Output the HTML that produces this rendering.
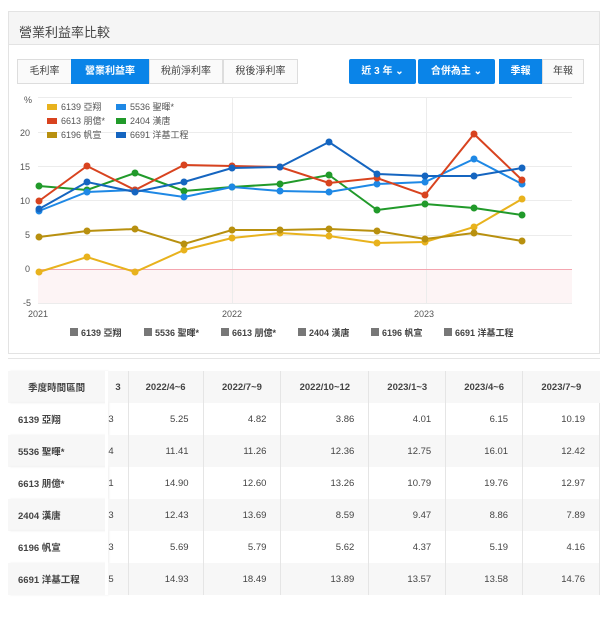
<!DOCTYPE html>
<html><head><meta charset="utf-8"><style>
*{box-sizing:border-box;margin:0;padding:0}
body{width:608px;height:622px;background:#fff;font-family:"Liberation Sans","Noto Sans CJK TC",sans-serif;color:#333;position:relative;overflow:hidden}
.panel{position:absolute;left:8px;top:11px;width:592px;height:343px;border:1px solid #e3e3e3;background:#fff}
.ph{height:33px;background:#f5f5f5;border-bottom:1px solid #e3e3e3;font-size:13px;padding:10px 0 0 10px;color:#444}
.btn{position:absolute;top:47px;height:25px;font-size:10px;line-height:23px;text-align:center;border:1px solid #ddd;background:#fafafa;color:#444}
.b{background:#0a84e8;color:#fff;border-color:#0a84e8;font-weight:bold}
.tbl{position:absolute;left:8px;top:358px;width:592px;height:236px;border-top:1px solid #e5e5e5}
table{border-collapse:collapse;font-size:9.5px;position:absolute;left:0;top:12px;color:#444}
td{height:32px;border-right:1px solid #e5e5e5;text-align:right;padding-right:14px}
tr.h td{text-align:center;padding:0;font-weight:bold}
tr:nth-child(odd) td{background:#f7f7f7}
td.f{text-align:left;padding-left:10px;font-weight:bold;border-right:3px solid #fff;box-shadow:2px 0 2px #eee}
</style></head><body>
<div class="panel">
<div class="ph">營業利益率比較</div>
<div class="btn" style="left:8px;width:55px">毛利率</div>
<div class="btn b" style="left:62px;width:78px">營業利益率</div>
<div class="btn" style="left:140px;width:74px">稅前淨利率</div>
<div class="btn" style="left:214px;width:75px">稅後淨利率</div>
<div class="btn b" style="left:340px;width:67px;border-radius:2px">近 3 年 ⌄</div>
<div class="btn b" style="left:409px;width:77px;border-radius:2px">合併為主 ⌄</div>
<div class="btn b" style="left:490px;width:43px">季報</div>
<div class="btn" style="left:533px;width:42px">年報</div>
</div>
<svg style="position:absolute;left:0;top:0" width="608" height="360" font-family="Liberation Sans,Noto Sans CJK TC,sans-serif">
<rect x="38" y="269" width="534" height="34" fill="#fdf4f5"/>
<g stroke="#ececec" stroke-width="1">
<line x1="38" y1="97.5" x2="572" y2="97.5"/><line x1="38" y1="132.5" x2="572" y2="132.5"/><line x1="38" y1="166.5" x2="572" y2="166.5"/><line x1="38" y1="200.5" x2="572" y2="200.5"/><line x1="38" y1="235.5" x2="572" y2="235.5"/><line x1="38" y1="303.5" x2="572" y2="303.5"/>
<line x1="232.5" y1="97" x2="232.5" y2="303"/><line x1="426.5" y1="97" x2="426.5" y2="303"/></g>
<line x1="38" y1="269.5" x2="572" y2="269.5" stroke="#f4a6b0"/>
<g font-size="9" fill="#555"><text x="24" y="103">%</text><text x="20" y="136">20</text><text x="20" y="170">15</text><text x="20" y="204">10</text><text x="25" y="238">5</text><text x="25" y="272">0</text><text x="23" y="306">-5</text>
<text x="28" y="317">2021</text><text x="222" y="317">2022</text><text x="414" y="317">2023</text></g>
<g font-size="9" fill="#555">
<rect x="47" y="104" width="10" height="6" fill="#e8b21d"/><text x="61" y="110">6139 亞翔</text>
<rect x="116" y="104" width="10" height="6" fill="#1e88e5"/><text x="130" y="110">5536 聖暉*</text>
<rect x="47" y="118" width="10" height="6" fill="#d8431f"/><text x="61" y="124">6613 朋億*</text>
<rect x="116" y="118" width="10" height="6" fill="#219a2a"/><text x="130" y="124">2404 漢唐</text>
<rect x="47" y="132" width="10" height="6" fill="#b8900f"/><text x="61" y="138">6196 帆宣</text>
<rect x="116" y="132" width="10" height="6" fill="#1565c0"/><text x="130" y="138">6691 洋基工程</text>
</g>
<g fill="none" stroke-width="2">
<polyline stroke="#e8b21d" points="39,272 87,257 135,272 184,250 232,238 280,233 329,236 377,243 425,242 474,227 522,199"/>
<polyline stroke="#b8900f" points="39,237 87,231 135,229 184,244 232,230 280,230 329,229 377,231 425,239 474,233 522,241"/>
<polyline stroke="#219a2a" points="39,186 87,190 135,173 184,191 232,187 280,184 329,175 377,210 425,204 474,208 522,215"/>
<polyline stroke="#1e88e5" points="39,211 87,192 135,190 184,197 232,187 280,191 329,192 377,184 425,182 474,159 522,184"/>
<polyline stroke="#d8431f" points="39,201 87,166 135,190 184,165 232,166 280,167 329,183 377,178 425,195 474,134 522,180"/>
<polyline stroke="#1565c0" points="39,209 87,182 135,192 184,182 232,168 280,167 329,142 377,174 425,176 474,176 522,168"/>
</g>
<g stroke="none">
<g fill="#e8b21d"><circle cx="39" cy="272" r="3.5"/><circle cx="87" cy="257" r="3.5"/><circle cx="135" cy="272" r="3.5"/><circle cx="184" cy="250" r="3.5"/><circle cx="232" cy="238" r="3.5"/><circle cx="280" cy="233" r="3.5"/><circle cx="329" cy="236" r="3.5"/><circle cx="377" cy="243" r="3.5"/><circle cx="425" cy="242" r="3.5"/><circle cx="474" cy="227" r="3.5"/><circle cx="522" cy="199" r="3.5"/></g>
<g fill="#b8900f"><circle cx="39" cy="237" r="3.5"/><circle cx="87" cy="231" r="3.5"/><circle cx="135" cy="229" r="3.5"/><circle cx="184" cy="244" r="3.5"/><circle cx="232" cy="230" r="3.5"/><circle cx="280" cy="230" r="3.5"/><circle cx="329" cy="229" r="3.5"/><circle cx="377" cy="231" r="3.5"/><circle cx="425" cy="239" r="3.5"/><circle cx="474" cy="233" r="3.5"/><circle cx="522" cy="241" r="3.5"/></g>
<g fill="#219a2a"><circle cx="39" cy="186" r="3.5"/><circle cx="87" cy="190" r="3.5"/><circle cx="135" cy="173" r="3.5"/><circle cx="184" cy="191" r="3.5"/><circle cx="232" cy="187" r="3.5"/><circle cx="280" cy="184" r="3.5"/><circle cx="329" cy="175" r="3.5"/><circle cx="377" cy="210" r="3.5"/><circle cx="425" cy="204" r="3.5"/><circle cx="474" cy="208" r="3.5"/><circle cx="522" cy="215" r="3.5"/></g>
<g fill="#1e88e5"><circle cx="39" cy="211" r="3.5"/><circle cx="87" cy="192" r="3.5"/><circle cx="135" cy="190" r="3.5"/><circle cx="184" cy="197" r="3.5"/><circle cx="232" cy="187" r="3.5"/><circle cx="280" cy="191" r="3.5"/><circle cx="329" cy="192" r="3.5"/><circle cx="377" cy="184" r="3.5"/><circle cx="425" cy="182" r="3.5"/><circle cx="474" cy="159" r="3.5"/><circle cx="522" cy="184" r="3.5"/></g>
<g fill="#d8431f"><circle cx="39" cy="201" r="3.5"/><circle cx="87" cy="166" r="3.5"/><circle cx="135" cy="190" r="3.5"/><circle cx="184" cy="165" r="3.5"/><circle cx="232" cy="166" r="3.5"/><circle cx="280" cy="167" r="3.5"/><circle cx="329" cy="183" r="3.5"/><circle cx="377" cy="178" r="3.5"/><circle cx="425" cy="195" r="3.5"/><circle cx="474" cy="134" r="3.5"/><circle cx="522" cy="180" r="3.5"/></g>
<g fill="#1565c0"><circle cx="39" cy="209" r="3.5"/><circle cx="87" cy="182" r="3.5"/><circle cx="135" cy="192" r="3.5"/><circle cx="184" cy="182" r="3.5"/><circle cx="232" cy="168" r="3.5"/><circle cx="280" cy="167" r="3.5"/><circle cx="329" cy="142" r="3.5"/><circle cx="377" cy="174" r="3.5"/><circle cx="425" cy="176" r="3.5"/><circle cx="474" cy="176" r="3.5"/><circle cx="522" cy="168" r="3.5"/></g>
</g>
<g font-size="9" fill="#444" font-weight="bold">
<rect x="70" y="328" width="8" height="8" fill="#777"/><text x="81" y="336">6139 亞翔</text>
<rect x="144" y="328" width="8" height="8" fill="#777"/><text x="155" y="336">5536 聖暉*</text>
<rect x="221" y="328" width="8" height="8" fill="#777"/><text x="232" y="336">6613 朋億*</text>
<rect x="298" y="328" width="8" height="8" fill="#777"/><text x="309" y="336">2404 漢唐</text>
<rect x="371" y="328" width="8" height="8" fill="#777"/><text x="382" y="336">6196 帆宣</text>
<rect x="444" y="328" width="8" height="8" fill="#777"/><text x="455" y="336">6691 洋基工程</text>
</g>
</svg>
<div class="tbl">
<table>
<tr class="h"><td class="f" style="width:99px">季度時間區間</td><td style="width:21px">3</td><td style="width:75px">2022/4~6</td><td style="width:78px">2022/7~9</td><td style="width:88px">2022/10~12</td><td style="width:77px">2023/1~3</td><td style="width:77px">2023/4~6</td><td style="width:77px;border-right:none">2023/7~9</td></tr>
<tr><td class="f">6139 亞翔</td><td>3</td><td>5.25</td><td>4.82</td><td>3.86</td><td>4.01</td><td>6.15</td><td>10.19</td></tr>
<tr><td class="f">5536 聖暉*</td><td>4</td><td>11.41</td><td>11.26</td><td>12.36</td><td>12.75</td><td>16.01</td><td>12.42</td></tr>
<tr><td class="f">6613 朋億*</td><td>1</td><td>14.90</td><td>12.60</td><td>13.26</td><td>10.79</td><td>19.76</td><td>12.97</td></tr>
<tr><td class="f">2404 漢唐</td><td>3</td><td>12.43</td><td>13.69</td><td>8.59</td><td>9.47</td><td>8.86</td><td>7.89</td></tr>
<tr><td class="f">6196 帆宣</td><td>3</td><td>5.69</td><td>5.79</td><td>5.62</td><td>4.37</td><td>5.19</td><td>4.16</td></tr>
<tr><td class="f">6691 洋基工程</td><td>5</td><td>14.93</td><td>18.49</td><td>13.89</td><td>13.57</td><td>13.58</td><td>14.76</td></tr>
</table>
</div>
</body></html>
